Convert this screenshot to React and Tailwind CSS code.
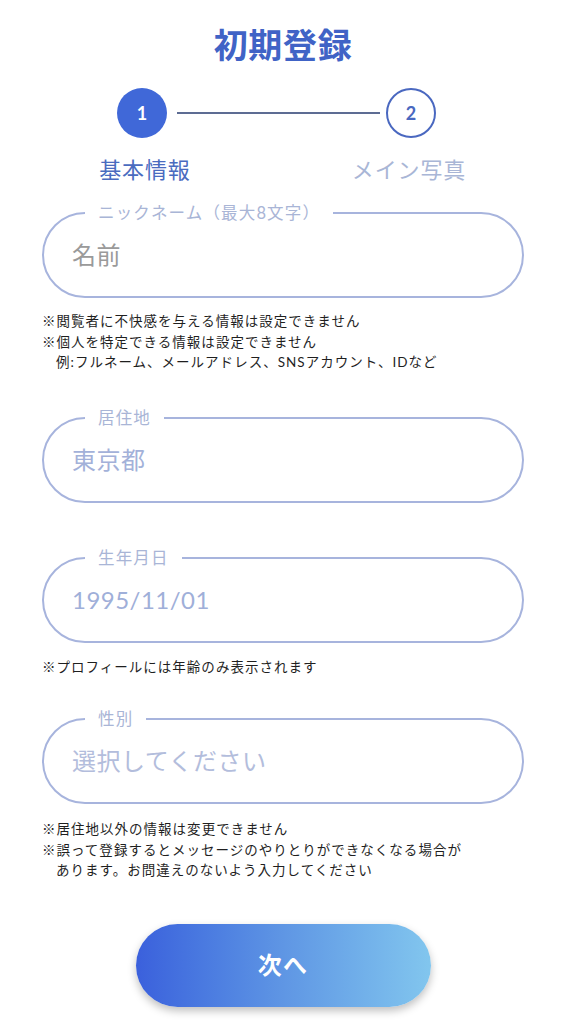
import React from 'react';

const font = { fontFamily: 'Lato, "Noto Sans CJK JP", sans-serif' };

function Field({ label, value, valueClass }) {
  return (
    <fieldset className="mx-[42px] rounded-full border-[2.5px] border-[#a7b4dd]">
      <legend className="ml-[41px] px-[13px] text-[16.5px] leading-[22px] tracking-[0.07em] text-[#a9b5d6]">
        {label}
      </legend>
      <div className={`flex h-[72px] items-center pb-[10px] pl-[28px] text-[24px] tracking-[0.02em] ${valueClass}`}>
        {value}
      </div>
    </fieldset>
  );
}

function Notes({ lines, className = '' }) {
  return (
    <div className={`mx-[42px] text-[13.5px] leading-[20.5px] tracking-[0.075em] text-[#1f1f1f] ${className}`}>
      {lines.map((l, i) => (
        <div key={i} className={l.indent ? 'pl-[14px]' : ''}>
          {l.text}
        </div>
      ))}
    </div>
  );
}

export default function App() {
  return (
    <div className="min-h-[1024px] w-full bg-white pb-[16px]" style={font}>
      <h1 className="pt-[21px] text-center text-[34px] font-bold leading-[48px] tracking-[0.02em] text-[#4063c6]">
        初期登録
      </h1>

      <div className="mt-[19px] flex items-center justify-center pr-[13px]">
        <div className="flex h-[50px] w-[50px] items-center justify-center rounded-full bg-[#4068d8] text-[18px] font-bold text-white">
          1
        </div>
        <div className="ml-[10px] mr-[6px] h-[2px] w-[203px] bg-[#5d6c93]" />
        <div className="flex h-[50px] w-[50px] items-center justify-center rounded-full border-[2.5px] border-[#4a68c0] bg-white text-[18px] font-bold text-[#4a68c0]">
          2
        </div>
      </div>

      <div className="mt-[17px] flex justify-center pr-[12px] text-[22px] leading-[30px] tracking-[0.04em]">
        <div className="w-[150px] text-center text-[#4a6bbf]">基本情報</div>
        <div className="w-[114px]" />
        <div className="w-[150px] text-center text-[#a9b6d6]">メイン写真</div>
      </div>

      <div className="mt-[17px]">
        <Field label="ニックネーム（最大8文字）" value="名前" valueClass="text-[#9a9a9a]" />
      </div>
      <Notes
        className="mt-[13px]"
        lines={[
          { text: '※閲覧者に不快感を与える情報は設定できません' },
          { text: '※個人を特定できる情報は設定できません' },
          { text: '例:フルネーム、メールアドレス、SNSアカウント、IDなど', indent: true },
        ]}
      />

      <div className="mt-[34px]">
        <Field label="居住地" value="東京都" valueClass="text-[#a3b1d9]" />
      </div>

      <div className="mt-[44px]">
        <Field label="生年月日" value="1995/11/01" valueClass="text-[#9fafd9]" />
      </div>
      <Notes className="mt-[14px]" lines={[{ text: '※プロフィールには年齢のみ表示されます' }]} />

      <div className="mt-[31px]">
        <Field label="性別" value="選択してください" valueClass="text-[#b3bddc]" />
      </div>
      <Notes
        className="mt-[15px]"
        lines={[
          { text: '※居住地以外の情報は変更できません' },
          { text: '※誤って登録するとメッセージのやりとりができなくなる場合が' },
          { text: 'あります。お問違えのないよう入力してください', indent: true },
        ]}
      />

      <div className="mt-[43px] flex justify-center">
        <button className="flex h-[83px] w-[295px] items-center justify-center rounded-full bg-gradient-to-r from-[#3b60dc] via-[#5f96e4] to-[#82c6ee] text-[24px] font-bold tracking-[0.05em] text-white shadow-[0_4px_8px_rgba(0,0,0,0.25)]">
          次へ
        </button>
      </div>
    </div>
  );
}
